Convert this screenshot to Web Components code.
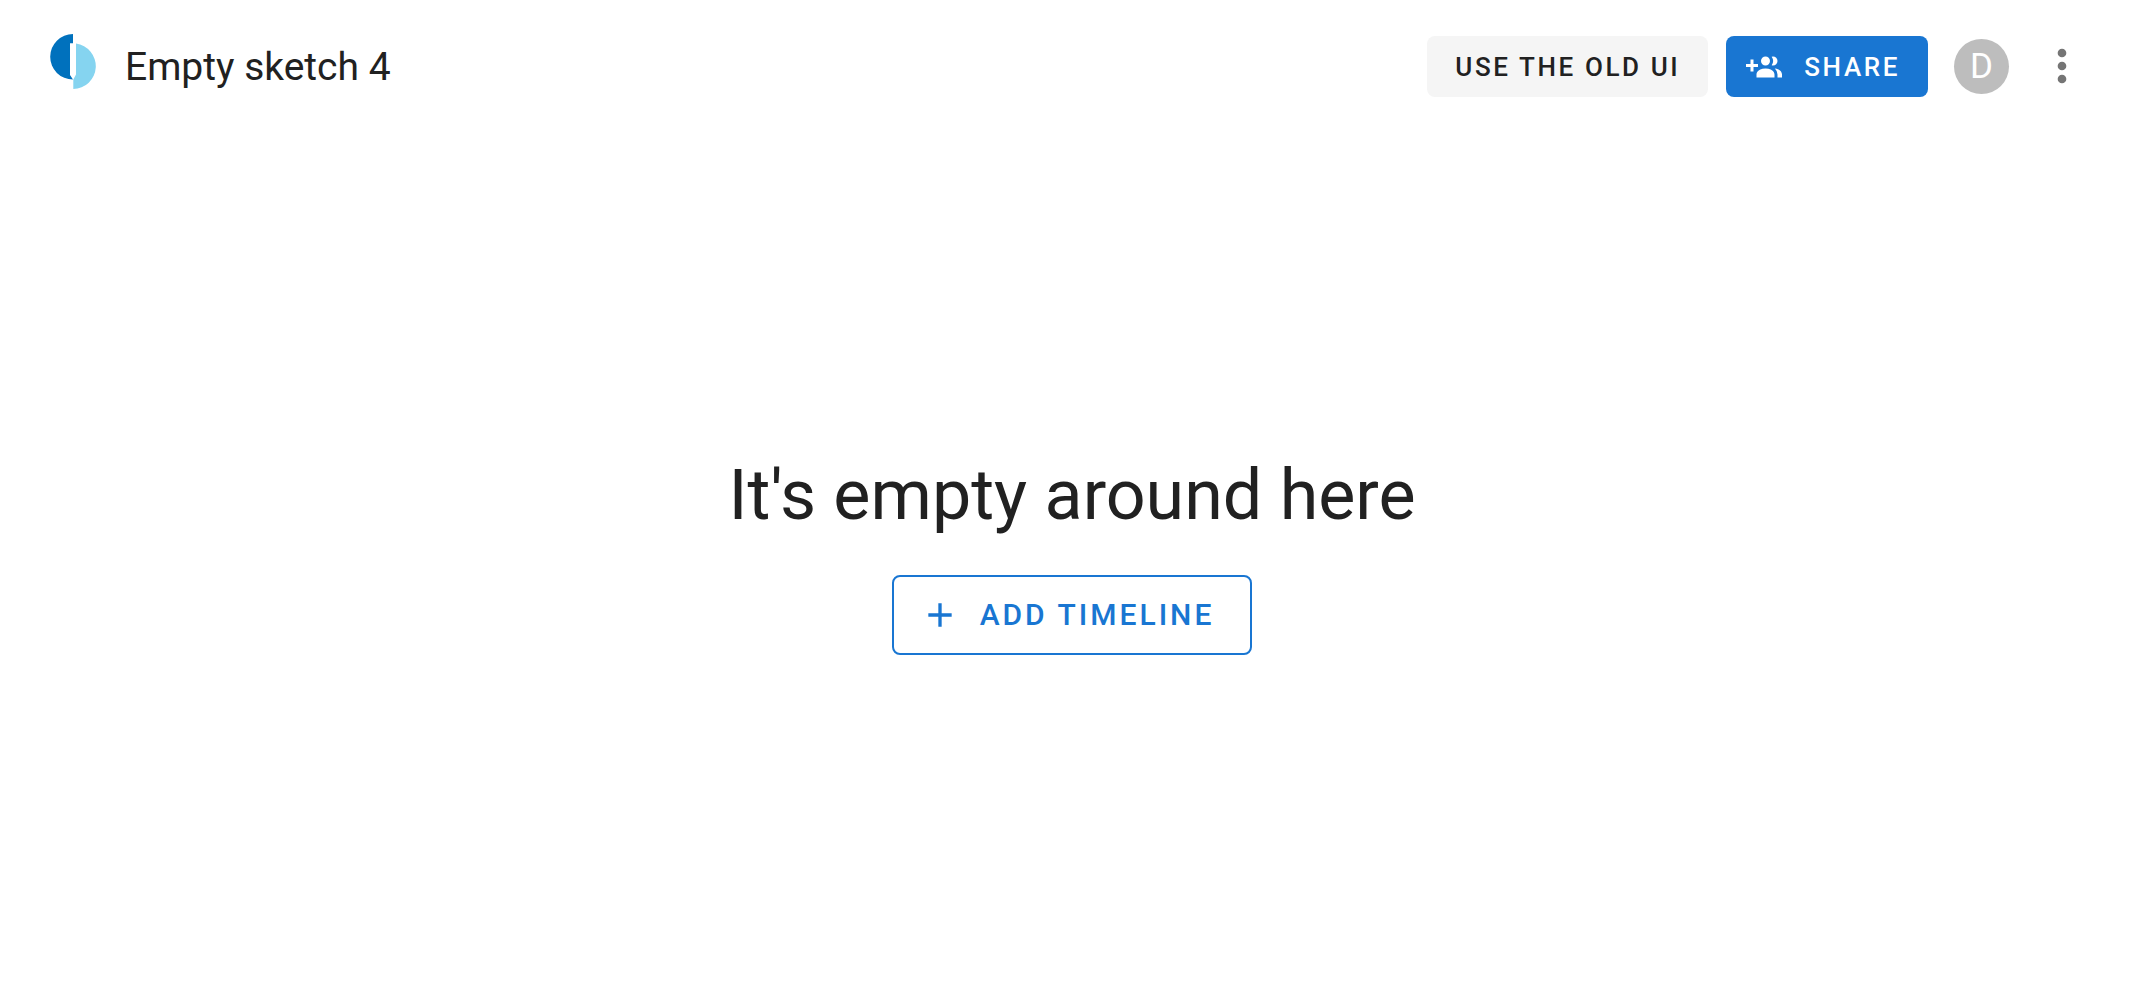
<!DOCTYPE html>
<html lang="en">
<head>
<meta charset="utf-8">
<meta name="viewport" content="width=device-width, initial-scale=1">
<title>Empty sketch 4</title>
<style>
html, body { height: 100%; }
body { margin: 0; background: #fff; color: #212121; font-family: Roboto, "Liberation Sans", sans-serif; }
</style>
</head>
<body>
<sketch-app></sketch-app>
<script>
class BaseElement extends HTMLElement {
  constructor() {
    super();
    this.attachShadow({ mode: "open" }).innerHTML =
      `<style>*{box-sizing:border-box}${this.constructor.styles}</style>${this.constructor.markup}`;
  }
}

class SketchLogo extends BaseElement {
  static styles = `:host{display:block;width:46px;height:55px} svg{display:block}`;
  static markup = `<svg width="46" height="55" viewBox="0 0 46 55" aria-hidden="true">
    <path fill="#0071bd" d="M23 0A22.8 22.8 0 0 0 23 45.6L20 41V9.2H23Z"/>
    <path fill="#85d4f0" d="M26 9.6A22.8 22.8 0 0 1 23.3 55V45.5L26 40.5Z"/></svg>`;
}

class AppButton extends BaseElement {
  static styles = `
    :host{display:block;flex:none}
    button{display:flex;align-items:center;height:61px;padding:0 28px;border:0;border-radius:8px;margin:0;
      background:#f5f5f5;color:#212121;font-family:inherit;font-size:26px;font-weight:500;
      letter-spacing:.1em;text-transform:uppercase;white-space:nowrap;cursor:pointer}
    :host([variant=primary]) button{background:#1976d2;color:#fff;padding-left:20px;gap:22px}
    :host([variant=outlined]) button{background:transparent;color:#1976d2;border:2px solid #1976d2;
      height:80px;font-size:30px;padding:0 36px 0 26px;gap:20px}
    ::slotted(svg){display:block;flex:none;fill:currentColor}`;
  static markup = `<button type="button"><slot name="icon"></slot><slot></slot></button>`;
}

class UserAvatar extends BaseElement {
  static styles = `
    :host{display:block;flex:none}
    button{display:flex;align-items:center;justify-content:center;width:55px;height:55px;padding:0;border:0;
      border-radius:50%;background:#bdbdbd;color:#fff;font-family:inherit;font-size:35px;line-height:1;cursor:pointer}`;
  static markup = `<button type="button"><slot></slot></button>`;
}

class MoreMenu extends BaseElement {
  static styles = `
    :host{display:block;flex:none}
    button{display:flex;align-items:center;justify-content:center;width:52px;height:52px;padding:0;border:0;
      border-radius:50%;background:transparent;color:#757575;cursor:pointer}`;
  static markup = `<button type="button" aria-label="More options">
    <svg width="52" height="52" viewBox="0 0 24 24" fill="currentColor"><path d="M12 16a2 2 0 1 1 0 4 2 2 0 0 1 0-4m0-6a2 2 0 1 1 0 4 2 2 0 0 1 0-4m0-6a2 2 0 1 1 0 4 2 2 0 0 1 0-4z"/></svg></button>`;
}

class SketchHeader extends BaseElement {
  static styles = `
    :host{display:block}
    header{display:flex;align-items:center;height:133px;padding:0 50px}
    h1{margin:0 auto 0 29px;font-size:39px;line-height:48px;font-weight:400;white-space:nowrap}
    .actions{display:flex;align-items:center;gap:18px}
    user-avatar{margin-left:8px}
    more-menu{margin:0 0 2px 9px}
    sketch-logo{margin-bottom:10px}`;
  static markup = `<header>
    <sketch-logo></sketch-logo>
    <h1><slot></slot></h1>
    <div class="actions">
      <app-button>Use the old UI</app-button>
      <app-button variant="primary"><svg slot="icon" width="36" height="36" viewBox="0 0 24 24" aria-hidden="true"><path d="M19 17v2H7v-2s0-4 6-4 6 4 6 4M16 8a3 3 0 1 0-3 3 3 3 0 0 0 3-3m3.2 5.06A5.6 5.6 0 0 1 21 17v2h3v-2s0-3.45-4.8-3.94M18 5a2.91 2.91 0 0 0-.89.14 5 5 0 0 1 0 5.72A2.91 2.91 0 0 0 18 11a3 3 0 0 0 0-6M8 10H5V7H3v3H0v2h3v3h2v-3h3z"/></svg>Share</app-button>
      <user-avatar>D</user-avatar>
      <more-menu></more-menu>
    </div></header>`;
}

class EmptyState extends BaseElement {
  static styles = `
    :host{display:flex;flex-direction:column;align-items:center;gap:36px}
    h2{margin:0;font-size:70px;line-height:88px;font-weight:400;text-align:center}`;
  static markup = `<h2><slot></slot></h2><slot name="action"></slot>`;
}

class SketchApp extends BaseElement {
  static styles = `
    :host{display:flex;flex-direction:column;min-height:100%}
    main{flex:1;display:flex;align-items:center;justify-content:center;padding:0 0 32px 6px}`;
  static markup = `<sketch-header>Empty sketch 4</sketch-header>
    <main><empty-state>It's empty around here
      <app-button slot="action" variant="outlined"><svg slot="icon" width="40" height="40" viewBox="0 0 24 24" aria-hidden="true"><path d="M19 13h-6v6h-2v-6H5v-2h6V5h2v6h6z"/></svg>Add timeline</app-button>
    </empty-state></main>`;
}

customElements.define("sketch-logo", SketchLogo);
customElements.define("app-button", AppButton);
customElements.define("user-avatar", UserAvatar);
customElements.define("more-menu", MoreMenu);
customElements.define("sketch-header", SketchHeader);
customElements.define("empty-state", EmptyState);
customElements.define("sketch-app", SketchApp);
</script>
</body>
</html>
